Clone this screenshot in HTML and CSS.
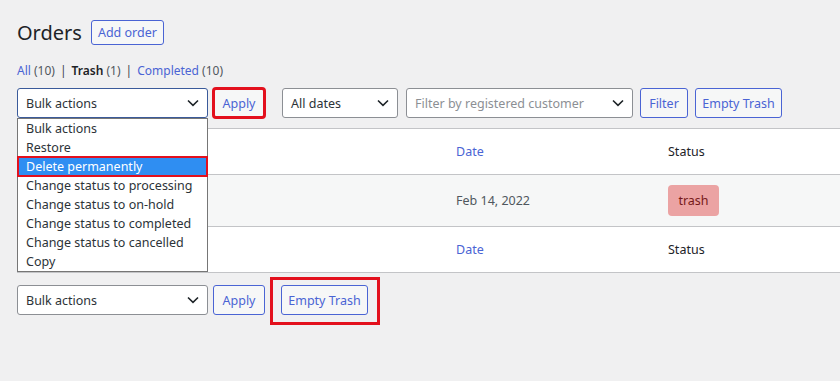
FILE: index.html
```html
<!DOCTYPE html>
<html lang="en">
<head>
  <meta charset="UTF-8" />
  <title>Orders</title>
  <link rel="stylesheet" href="styles.css">
</head>
<body>
  <div class="wrap">

    <div class="page-head">
      <h1>Orders</h1>
      <a class="btn btn-add" href="#">Add order</a>
    </div>

    <ul class="subsub">
      <li><a href="#">All</a> <span class="count">(10)</span></li>
      <li class="sep">|</li>
      <li><b>Trash</b> <span class="count">(1)</span></li>
      <li class="sep">|</li>
      <li><a href="#">Completed</a> <span class="count">(10)</span></li>
    </ul>

    <!-- top tablenav with open bulk menu -->
    <div class="tablenav tablenav-top">
      <div class="select select-bulk is-focus">
        <span>Bulk actions</span>
        <svg class="chev" width="12" height="8" viewBox="0 0 12 8"><path d="M1 1.5 6 6.3 11 1.5" fill="none" stroke="#1d2327" stroke-width="1.6"/></svg>
      </div>
      <button class="btn btn-apply marked">Apply</button>
      <div class="select select-dates">
        <span>All dates</span>
        <svg class="chev" width="12" height="8" viewBox="0 0 12 8"><path d="M1 1.5 6 6.3 11 1.5" fill="none" stroke="#1d2327" stroke-width="1.6"/></svg>
      </div>
      <div class="select select-customer">
        <span class="placeholder">Filter by registered customer</span>
        <svg class="chev" width="12" height="8" viewBox="0 0 12 8"><path d="M1 1.5 6 6.3 11 1.5" fill="none" stroke="#1d2327" stroke-width="1.6"/></svg>
      </div>
      <button class="btn btn-filter">Filter</button>
      <button class="btn btn-empty">Empty Trash</button>

      <ul class="dropdown">
        <li>Bulk actions</li>
        <li>Restore</li>
        <li class="active">Delete permanently</li>
        <li>Change status to processing</li>
        <li>Change status to on-hold</li>
        <li>Change status to completed</li>
        <li>Change status to cancelled</li>
        <li>Copy</li>
      </ul>
    </div>

    <div class="orders-table">
      <div class="row row-head">
        <div class="cell"></div>
        <div class="cell"><a href="#">Date</a></div>
        <div class="cell">Status</div>
      </div>
      <div class="row row-body">
        <div class="cell"></div>
        <div class="cell date">Feb 14, 2022</div>
        <div class="cell"><mark class="status-trash">trash</mark></div>
      </div>
      <div class="row row-foot">
        <div class="cell"></div>
        <div class="cell"><a href="#">Date</a></div>
        <div class="cell">Status</div>
      </div>
    </div>

    <div class="tablenav tablenav-bottom">
      <div class="select select-bulk">
        <span>Bulk actions</span>
        <svg class="chev" width="12" height="8" viewBox="0 0 12 8"><path d="M1 1.5 6 6.3 11 1.5" fill="none" stroke="#1d2327" stroke-width="1.6"/></svg>
      </div>
      <button class="btn btn-apply">Apply</button>
      <div class="highlight-box">
        <button class="btn btn-empty">Empty Trash</button>
      </div>
    </div>

  </div>
</body>
</html>
```

FILE: styles.css
```css
* {
  box-sizing: border-box;
}
body {
  margin: 0;
  background: #f0f0f1;
  color: #3c434a;
  font-family: 'Noto Sans', 'Open Sans', sans-serif;
  font-size: 12.5px;
}
a {
  color: #4a64d4;
  text-decoration: none;
}
.wrap {
  padding: 0 0 40px 17px;
}

/* Heading */
.page-head {
  display: flex;
  align-items: center;
  gap: 9px;
  padding-top: 20px;
  height: 45px;
}
.page-head h1 {
  margin: 0;
  font-size: 20px;
  font-weight: 400;
  color: #1d2327;
  line-height: 25px;
}

/* Buttons */
.btn {
  display: inline-flex;
  align-items: center;
  justify-content: center;
  height: 30px;
  padding: 0;
  border: 1px solid #4a64d4;
  border-radius: 3px;
  background: #f6f7f7;
  color: #4a64d4;
  font-family: inherit;
  font-size: 12.5px;
  white-space: nowrap;
  cursor: pointer;
}
.btn-add {
  height: 25px;
  width: 73px;
}

/* Status links */
.subsub {
  list-style: none;
  margin: 17px 0 0;
  padding: 0;
  display: flex;
  gap: 5px;
  line-height: 18px;
  height: 18px;
  font-size: 12px;
}
.subsub b {
  color: #1d2327;
  font-weight: 600;
}
.subsub .count {
  color: #50575e;
}
.subsub .sep {
  color: #3c434a;
}

/* Table nav */
.tablenav {
  position: relative;
  display: flex;
  align-items: flex-start;
  height: 30px;
}
.tablenav-top {
  margin-top: 8px;
}
.tablenav-bottom {
  margin-top: 12px;
}
.select {
  display: flex;
  align-items: center;
  justify-content: space-between;
  height: 30px;
  padding: 0 8px 0 8px;
  border: 1px solid #8c8f94;
  border-radius: 3px;
  background: #fff;
  color: #2c3338;
}
.select .chev {
  flex: none;
}
.select .placeholder {
  color: #8c8f94;
}
.select-bulk {
  width: 191px;
}
.select-bulk.is-focus {
  border-color: #3a5a9a;
}
.btn-apply {
  width: 52px;
  margin-left: 5px;
}
.tablenav-top .btn-apply {
  border-color: #f6f7f7;
}
.marked {
  outline: 3px solid #e3101d;
  outline-offset: -2px;
}
.select-dates {
  width: 116px;
  margin-left: 17px;
}
.select-customer {
  width: 227px;
  margin-left: 8px;
}
.btn-filter {
  width: 48px;
  margin-left: 7px;
}
.btn-empty {
  width: 87px;
  margin-left: 7px;
}
.highlight-box .btn-empty {
  margin-left: 0;
}

/* Open bulk actions list */
.dropdown {
  position: absolute;
  top: 30px;
  left: 0;
  width: 191px;
  margin: 0;
  padding: 0;
  list-style: none;
  background: #fff;
  border: 1px solid #767676;
  z-index: 10;
}
.dropdown li {
  height: 19px;
  line-height: 19px;
  padding-left: 8px;
  color: #2c3338;
  white-space: nowrap;
}
.dropdown li.active {
  background: #2f8ef2;
  color: #fff;
  outline: 2px solid #e3101d;
  outline-offset: -1px;
}

/* Orders table */
.orders-table {
  margin-top: 10px;
  background: #fff;
  border-top: 1px solid #c3c4c7;
  border-bottom: 1px solid #c3c4c7;
  border-left: 1px solid #c3c4c7;
}
.row {
  display: grid;
  grid-template-columns: 428px 212px 1fr;
  align-items: center;
}
.row .cell {
  padding-left: 10px;
}
.row-head {
  height: 46px;
  border-bottom: 1px solid #c3c4c7;
  color: #1d2327;
}
.row-body {
  height: 52px;
  background: #f6f7f7;
  border-bottom: 1px solid #c3c4c7;
}
.row-foot {
  height: 45px;
  color: #1d2327;
}
.date {
  color: #50575e;
}
.status-trash {
  display: inline-block;
  width: 51px;
  height: 31px;
  line-height: 31px;
  text-align: center;
  background: #eba3a3;
  color: #761919;
  border-radius: 4px;
}

/* Annotation box */
.highlight-box {
  position: relative;
  display: flex;
  height: 30px;
  margin-left: 16px;
}
.highlight-box::after {
  content: "";
  position: absolute;
  left: -11px;
  right: -12px;
  top: -8px;
  bottom: -10px;
  border: 3px solid #e3101d;
  pointer-events: none;
}
```
